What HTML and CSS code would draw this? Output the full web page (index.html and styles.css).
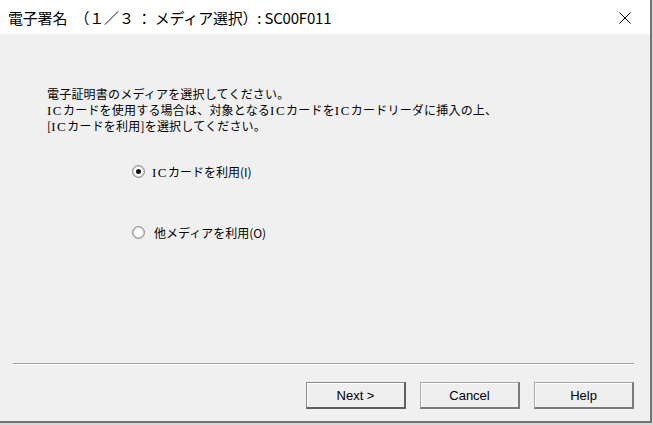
FILE: index.html
```html
<!DOCTYPE html>
<html lang="ja">
<head>
<meta charset="utf-8">
<title>電子署名</title>
<link rel="stylesheet" href="styles.css">
</head>
<body>
<div class="window">
  <div class="titlebar">
    <span class="title">電子署名　（１／３ ： メディア選択）: SC00F011</span>
    <svg class="close" width="12" height="12" viewBox="0 0 12 12"><path d="M0.5 0.5 L11.5 11.5 M11.5 0.5 L0.5 11.5" stroke="#000" stroke-width="1" fill="none"/></svg>
  </div>
  <div class="content">
    <div class="message">
      <p>電子証明書のメディアを選択してください。</p>
      <p><span class="ic">IC</span>カードを使用する場合は、対象となる<span class="ic">IC</span>カードを<span class="ic">IC</span>カードリーダに挿入の上、</p>
      <p>[<span class="ic">IC</span>カードを利用]を選択してください。</p>
    </div>
    <div class="options">
      <label class="option"><span class="radio checked"></span><span class="label"><span class="ic">IC</span>カードを利用(I)</span></label>
      <label class="option"><span class="radio"></span><span class="label label2">他メディアを利用(O)</span></label>
    </div>
  </div>
  <div class="footer">
    <div class="separator"></div>
    <div class="buttons">
      <button class="btn default">Next &gt;</button>
      <button class="btn">Cancel</button>
      <button class="btn">Help</button>
    </div>
  </div>
</div>
</body>
</html>
```
FILE: styles.css
```css
html, body {
  margin: 0;
  padding: 0;
  background: #d9d9d9;
  width: 653px;
  height: 425px;
  overflow: hidden;
}
.window {
  width: 650px;
  height: 421px;
  background: #f0f0f0;
  border-right: 2px solid #747474;
  border-bottom: 2px solid #747474;
  display: flex;
  flex-direction: column;
  font-family: "Noto Sans CJK JP", "Liberation Sans", sans-serif;
  color: #000;
}
.titlebar {
  height: 34px;
  background: #fff;
  display: flex;
  align-items: center;
  justify-content: space-between;
  padding: 0 19px 0 8px;
  flex-shrink: 0;
}
.title {
  font-size: 15px;
  letter-spacing: -0.2px;
  white-space: nowrap;
}
.close {
  display: block;
  margin-top: 1px;
}
.content {
  flex: 1;
  padding: 52px 0 0 47px;
}
.message p {
  margin: 0;
  font-size: 12px;
  line-height: 15.5px;
  white-space: nowrap;
  letter-spacing: 0.2px;
}
.ic {
  letter-spacing: 1.5px;
  font-family: "Liberation Serif", serif;
  font-size: 13px;
}
.options {
  margin-top: 29px;
  margin-left: 85px;
  display: flex;
  flex-direction: column;
  gap: 45px;
}
.option {
  display: flex;
  align-items: center;
  height: 16px;
  font-size: 12px;
}
.radio {
  width: 11px;
  height: 11px;
  border-radius: 50%;
  border: 1px solid #8a8a8a;
  background: radial-gradient(circle, #fff 55%, #e4e4e4 100%);
  box-shadow: inset 0 0 0 1px #d0d0d0;
  position: relative;
  flex-shrink: 0;
}
.radio.checked::after {
  content: "";
  position: absolute;
  left: 3px;
  top: 3px;
  width: 5px;
  height: 5px;
  border-radius: 50%;
  background: #111;
}
.label {
  margin-left: 7px;
}
.label2 {
  margin-left: 9px;
}
.footer {
  padding: 0 16px 12px 13px;
  flex-shrink: 0;
}
.separator {
  height: 1px;
  background: #a0a0a0;
  border-bottom: 1px solid #fff;
}
.buttons {
  margin-top: 17px;
  display: flex;
  justify-content: flex-end;
  gap: 14px;
}
.btn {
  width: 100px;
  height: 27px;
  margin: 0;
  padding: 0;
  font-family: "Liberation Sans", Arial, sans-serif;
  font-size: 13px;
  color: #000;
  background: #efefef;
  border-top: 1px solid #a6a6a6;
  border-left: 1px solid #a6a6a6;
  border-right: 2px solid #7a7a7a;
  border-bottom: 2px solid #7a7a7a;
  box-shadow: inset 1px 1px 0 #fff;
}
.btn.default {
  border-top-color: #8a8a8a;
  border-left-color: #8a8a8a;
  border-right-color: #606060;
  border-bottom-color: #606060;
}
```
